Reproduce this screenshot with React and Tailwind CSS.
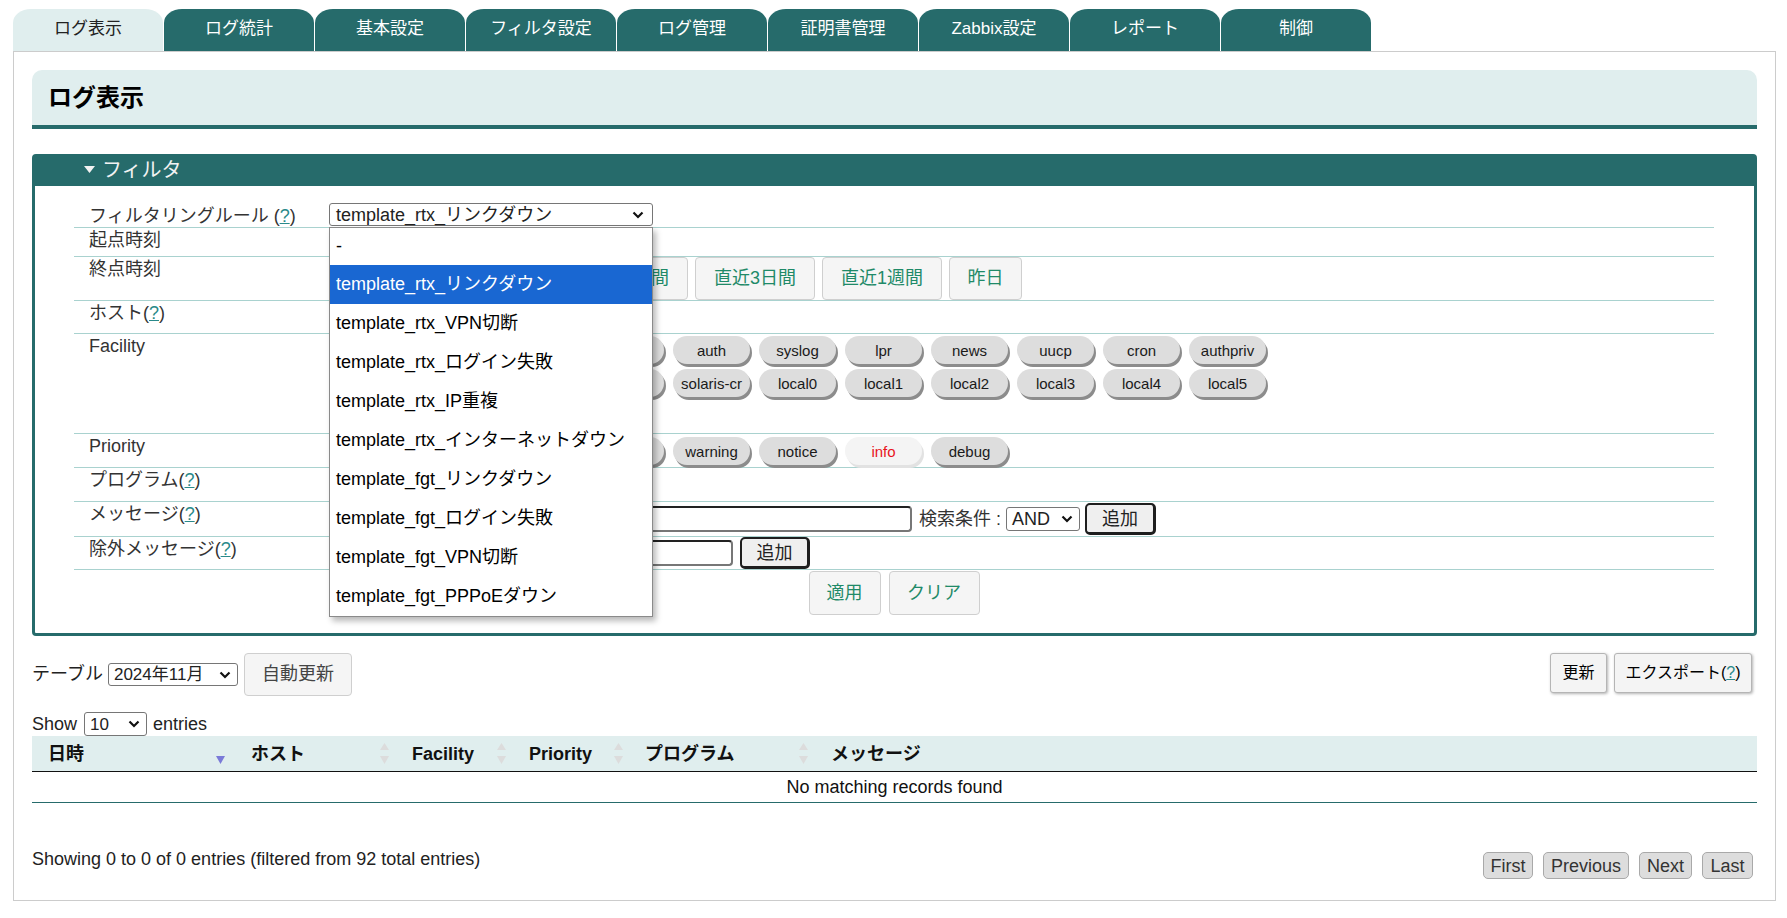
import React from 'react';

const tabs = ['ログ表示', 'ログ統計', '基本設定', 'フィルタ設定', 'ログ管理', '証明書管理', 'Zabbix設定', 'レポート', '制御'];

// Labels of pills that lie fully under the open dropdown are left blank (they are not visible).
const facilityRows = [
  ['', '', '', 'daemon', 'auth', 'syslog', 'lpr', 'news', 'uucp', 'cron', 'authpriv'],
  ['', '', '', 'console', 'solaris-cr', 'local0', 'local1', 'local2', 'local3', 'local4', 'local5'],
  ['', ''],
];
const priorities = ['', '', '', '', 'warning', 'notice', 'info', 'debug'];

const options = [
  '-',
  'template_rtx_リンクダウン',
  'template_rtx_VPN切断',
  'template_rtx_ログイン失敗',
  'template_rtx_IP重複',
  'template_rtx_インターネットダウン',
  'template_fgt_リンクダウン',
  'template_fgt_ログイン失敗',
  'template_fgt_VPN切断',
  'template_fgt_PPPoEダウン',
];

function Q() {
  return <span className="text-[#2a8a8a] underline">?</span>;
}

function Pill({ label, active }) {
  return (
    <div
      className={
        active
          ? 'w-[77px] h-[28px] rounded-full flex items-center justify-center text-[15px] leading-none bg-[#f4f4f4] text-[#e8141e] shadow-[2px_3px_0_#e2e2e2]'
          : 'w-[77px] h-[28px] rounded-full flex items-center justify-center text-[15px] leading-none bg-[#dddddd] text-[#1a1a1a] shadow-[2px_3px_0_#8c8c8c]'
      }
    >
      {label}
    </div>
  );
}

function Chevron() {
  return (
    <svg width="12" height="8" viewBox="0 0 12 8" className="shrink-0">
      <path d="M1.5 1.5 L6 6 L10.5 1.5" fill="none" stroke="#111" strokeWidth="2.2" />
    </svg>
  );
}

function SortIcon({ active }) {
  return (
    <svg width="9" height="22" viewBox="0 0 9 22" className="shrink-0">
      {!active && <path d="M4.5 0 L9 7 L0 7 Z" fill="#dcdcdc" />}
      <path d="M0 13 L9 13 L4.5 21 Z" fill={active ? '#7a7ad8' : '#dcdcdc'} />
    </svg>
  );
}

function Row({ label, h, children, last, lpt }) {
  return (
    <div className={(last ? '' : 'border-b border-[#a9d2cf] ') + 'flex ' + h}>
      <div className={'w-[255px] shrink-0 pl-[15px] text-[18px] leading-[24px] text-[#333] ' + (lpt || '')}>{label}</div>
      <div className="flex-1 min-w-0">{children}</div>
    </div>
  );
}

const greenBtn =
  'h-[43px] bg-[#f5f5f5] border border-[#cfcfcf] rounded-[4px] flex items-center justify-center text-[18px] text-[#1f8a68]';

export default function App() {
  return (
    <div className="w-[1787px] h-[918px] bg-white overflow-hidden font-['Liberation_Sans','Noto_Sans_CJK_JP',sans-serif] text-[#222]">
      {/* Tabs */}
      <div className="flex pl-[13px] pt-[9px] gap-[1px] h-[51px]">
        {tabs.map((t, i) => (
          <div
            key={t}
            className={
              i === 0
                ? 'w-[150px] h-[42px] rounded-t-[18px_14px] bg-[#e0eeee] text-[#222] flex items-center justify-center text-[17px] leading-none pb-[3px]'
                : 'w-[150px] h-[42px] rounded-t-[18px_14px] bg-[#266b6b] text-white flex items-center justify-center text-[17px] leading-none pb-[3px]'
            }
          >
            {t}
          </div>
        ))}
      </div>

      {/* Content */}
      <div className="ml-[13px] w-[1763px] h-[850px] border border-[#cccccc] px-[18px] pt-[18px]">
        <div className="h-[59px] rounded-t-[10px] bg-[#e0eeee] border-b-[4px] border-[#266b6b] pl-[16px] flex items-center text-[24px] font-bold text-black">
          ログ表示
        </div>

        {/* Filter box */}
        <div className="mt-[25px] h-[482px] border-[3px] border-[#266b6b] rounded-[4px]">
          <div className="h-[29px] bg-[#266b6b] flex items-center pl-[49px] pb-[4px] text-[#f2f2f2]">
            <svg width="11" height="7" viewBox="0 0 11 7" className="mr-[7px]">
              <path d="M0 0 L11 0 L5.5 7 Z" fill="#f2f2f2" />
            </svg>
            <span className="text-[20px] leading-none">フィルタ</span>
          </div>

          <div className="ml-[39px] mr-[40px] mt-[13px]">
            <Row label={<>フィルタリングルール (<Q />)</>} h="h-[29px]" lpt="pt-[5px]">
              <div className="pt-[4px]">
                <div className="relative w-[324px] h-[23px] border border-[#767676] rounded-[3px] bg-white flex items-center justify-between pl-[6px] pr-[8px] text-[18px] leading-none">
                  <span>template_rtx_リンクダウン</span>
                  <Chevron />
                  <div className="absolute -left-[1px] top-[23px] w-[324px] bg-white border border-[#8a8a8a] shadow-[3px_4px_6px_rgba(0,0,0,0.28)] z-10">
                    {options.map((o, i) => (
                      <div
                        key={o}
                        className={
                          i === 1
                            ? 'h-[39px] flex items-center pl-[6px] pb-[2px] text-[18px] leading-none bg-[#1967d2] text-white'
                            : i === 0
                            ? 'h-[37px] flex items-center pl-[6px] pb-[2px] text-[18px] leading-none text-black'
                            : 'h-[39px] flex items-center pl-[6px] pb-[2px] text-[18px] leading-none text-black'
                        }
                      >
                        {o}
                      </div>
                    ))}
                  </div>
                </div>
              </div>
            </Row>

            <Row label="起点時刻" h="h-[29px]">
              <div className="pt-[2px]">
                <div className="w-[200px] h-[24px] border border-[#767676] rounded-[2px]" />
              </div>
            </Row>

            <Row label="終点時刻" h="h-[44px]">
              <div className="flex gap-[7px] items-start">
                <div className="w-[105px] h-[24px] mt-[2px] border border-[#767676] rounded-[2px]" />
                <div className={greenBtn + ' w-[120px]'} />
                <div className={greenBtn + ' w-[120px] justify-end pr-[18px]'}>間</div>
                <div className={greenBtn + ' w-[120px]'}>直近3日間</div>
                <div className={greenBtn + ' w-[120px]'}>直近1週間</div>
                <div className={greenBtn + ' w-[73px]'}>昨日</div>
              </div>
            </Row>

            <Row label={<>ホスト(<Q />)</>} h="h-[33px]">
              <div className="pt-[3px]">
                <div className="w-[250px] h-[24px] border border-[#767676] rounded-[2px]" />
              </div>
            </Row>

            <Row label="Facility" h="h-[100px]">
              <div className="pt-[2px] flex flex-col gap-[5px]">
                {facilityRows.map((r, i) => (
                  <div key={i} className="flex gap-[9px]">
                    {r.map((f, j) => (
                      <Pill key={j} label={f} />
                    ))}
                  </div>
                ))}
              </div>
            </Row>

            <Row label="Priority" h="h-[34px]">
              <div className="pt-[3px] flex gap-[9px]">
                {priorities.map((p, j) => (
                  <Pill key={j} label={p} active={p === 'info'} />
                ))}
              </div>
            </Row>

            <Row label={<>プログラム(<Q />)</>} h="h-[34px]">
              <div className="pt-[4px]">
                <div className="w-[300px] h-[26px] border border-[#767676] rounded-[2px]" />
              </div>
            </Row>

            <Row label={<>メッセージ(<Q />)</>} h="h-[35px]">
              <div className="h-[34px] flex items-center">
                <div className="w-[583px] h-[26px] border-2 border-t-[#222] border-l-[#333] border-b-[#777] border-r-[#777] rounded-[4px] bg-white" />
                <span className="ml-[7px] text-[18px] leading-none text-[#333]">検索条件 :</span>
                <div className="ml-[5px] w-[74px] h-[24px] border border-[#767676] rounded-[3px] flex items-center justify-between pl-[5px] pr-[6px] text-[18px] leading-none">
                  <span>AND</span>
                  <Chevron />
                </div>
                <div className="ml-[5px] w-[71px] h-[32px] bg-[#efefef] border-2 border-[#1e1e1e] border-b-[3px] border-r-[3px] rounded-[5px] flex items-center justify-center text-[18px] leading-none">
                  追加
                </div>
              </div>
            </Row>

            <Row label={<>除外メッセージ(<Q />)</>} h="h-[33px]">
              <div className="h-[32px] flex items-center">
                <div className="w-[404px] h-[26px] border-2 border-t-[#222] border-l-[#333] border-b-[#777] border-r-[#777] rounded-[4px] bg-white" />
                <div className="ml-[7px] w-[70px] h-[32px] bg-[#efefef] border-2 border-[#1e1e1e] border-b-[3px] border-r-[3px] rounded-[5px] flex items-center justify-center text-[18px] leading-none">
                  追加
                </div>
              </div>
            </Row>

            <div className="h-[47px] flex justify-center gap-[8px] pt-[1px]">
              <div className={greenBtn + ' w-[72px] h-[44px]'}>適用</div>
              <div className={greenBtn + ' w-[91px] h-[44px]'}>クリア</div>
            </div>
          </div>
        </div>

        {/* Toolbar */}
        <div className="mt-[17px] h-[43px] flex justify-between items-start">
          <div className="flex items-center h-[43px]">
            <span className="text-[18px] leading-none text-[#222] pb-[2px]">テーブル</span>
            <div className="ml-[5px] w-[130px] h-[23px] border border-[#767676] rounded-[3px] flex items-center justify-between pl-[5px] pr-[6px] text-[17px] leading-none">
              <span>2024年11月</span>
              <Chevron />
            </div>
            <div className="ml-[6px] w-[108px] h-[43px] bg-[#f5f5f5] border border-[#cfcfcf] rounded-[4px] flex items-center justify-center text-[18px] text-[#444]">
              自動更新
            </div>
          </div>
          <div className="flex gap-[7px] mr-[5px]">
            <div className="w-[57px] h-[40px] bg-[#f4f4f4] border border-[#b5b5b5] rounded-[3px] shadow-[1px_1px_3px_rgba(0,0,0,0.3)] flex items-center justify-center text-[16px] text-black">
              更新
            </div>
            <div className="w-[138px] h-[40px] bg-[#f4f4f4] border border-[#b5b5b5] rounded-[3px] shadow-[1px_1px_3px_rgba(0,0,0,0.3)] flex items-center justify-center text-[16px] text-black">
              エクスポート(<Q />)
            </div>
          </div>
        </div>

        {/* Show entries */}
        <div className="mt-[16px] h-[24px] flex items-center text-[18px] leading-none">
          <span>Show</span>
          <div className="ml-[7px] w-[63px] h-[24px] border border-[#767676] rounded-[3px] flex items-center justify-between pl-[5px] pr-[6px] text-[17px] leading-none">
            <span>10</span>
            <Chevron />
          </div>
          <span className="ml-[6px]">entries</span>
        </div>

        {/* Table */}
        <div className="h-[36px] bg-[#e0eeee] border-b border-[#111] flex text-[18px] font-bold text-[#111] leading-none">
          <div className="w-[203px] flex items-center justify-between pl-[16px] pr-[10px]">
            <span>日時</span>
            <SortIcon active />
          </div>
          <div className="w-[161px] flex items-center justify-between pl-[16px] pr-[7px]">
            <span>ホスト</span>
            <SortIcon />
          </div>
          <div className="w-[117px] flex items-center justify-between pl-[16px] pr-[7px]">
            <span>Facility</span>
            <SortIcon />
          </div>
          <div className="w-[117px] flex items-center justify-between pl-[16px] pr-[7px]">
            <span>Priority</span>
            <SortIcon />
          </div>
          <div className="w-[185px] flex items-center justify-between pl-[15px] pr-[7px]">
            <span>プログラム</span>
            <SortIcon />
          </div>
          <div className="flex-1 flex items-center pl-[16px]">
            <span>メッセージ</span>
          </div>
        </div>
        <div className="h-[31px] border-b border-[#266b6b] flex items-center justify-center text-[18px] leading-none text-[#111]">
          No matching records found
        </div>

        {/* Footer */}
        <div className="mt-[47px] flex justify-between items-start">
          <div className="text-[18px] leading-[18px] text-[#222]">
            Showing 0 to 0 of 0 entries (filtered from 92 total entries)
          </div>
          <div className="mt-[2px] flex gap-[10px] mr-[4px] text-[18px] leading-none text-[#333]">
            <div className="w-[50px] h-[27px] bg-[#dddddd] border border-[#a9a9a9] rounded-[5px] flex items-center justify-center">First</div>
            <div className="w-[86px] h-[27px] bg-[#dddddd] border border-[#a9a9a9] rounded-[5px] flex items-center justify-center">Previous</div>
            <div className="w-[53px] h-[27px] bg-[#dddddd] border border-[#a9a9a9] rounded-[5px] flex items-center justify-center">Next</div>
            <div className="w-[51px] h-[27px] bg-[#dddddd] border border-[#a9a9a9] rounded-[5px] flex items-center justify-center">Last</div>
          </div>
        </div>
      </div>
    </div>
  );
}
